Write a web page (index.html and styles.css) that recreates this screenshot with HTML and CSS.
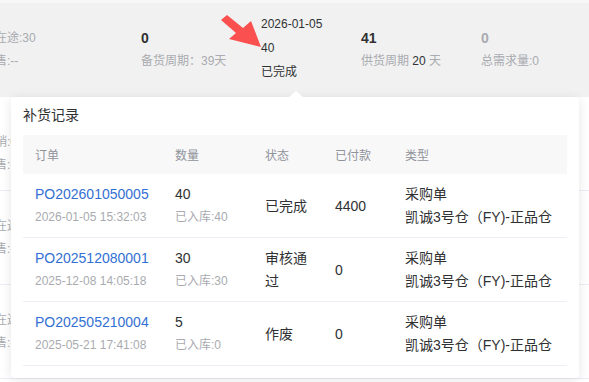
FILE: index.html
```html
<!DOCTYPE html>
<html lang="en">
<head>
    <meta charset="UTF-8">
    <meta name="viewport" content="width=device-width, initial-scale=1.0">
    <title>补货记录</title>
    <link rel="stylesheet" href="styles.css">
</head>
<body>
    <div class="page">
        <div class="row row-active">
            <div class="cell cell-a pad">
                <div class="muted">在途:30</div>
                <div class="muted">售:--</div>
            </div>
            <div class="cell cell-b pad">
                <div class="num">0</div>
                <div class="muted">备货周期：39天</div>
            </div>
            <div class="cell cell-c">
                <div>2026-01-05</div>
                <div>40</div>
                <div>已完成</div>
            </div>
            <div class="cell cell-d pad">
                <div class="num">41</div>
                <div class="muted">供货周期 <span class="dark">20</span> 天</div>
            </div>
            <div class="cell cell-e pad">
                <div class="num muted">0</div>
                <div class="muted">总需求量:0</div>
            </div>
        </div>
        <div class="row row-low">
            <div class="cell cell-a">
                <div class="muted">销:0</div>
                <div class="muted">售:--</div>
            </div>
        </div>
        <div class="row">
            <div class="cell cell-a">
                <div class="muted">在途:0</div>
                <div class="muted">售:--</div>
            </div>
        </div>
        <div class="row">
            <div class="cell cell-a">
                <div class="muted">在途:0</div>
                <div class="muted">售:--</div>
            </div>
        </div>

        <svg class="pointer" viewBox="218 12 48 44" width="48" height="44">
            <polygon points="227,15 243,28 251,21 261,47 229,39 236,33 221,20" fill="#fa5050"/>
        </svg>

        <div class="popover">
            <div class="popover-arrow"></div>
            <div class="popover-title">补货记录</div>
            <table class="record-table">
                <colgroup>
                    <col class="col-order">
                    <col class="col-qty">
                    <col class="col-status">
                    <col class="col-paid">
                    <col class="col-type">
                </colgroup>
                <tr>
                    <th>订单</th>
                    <th>数量</th>
                    <th>状态</th>
                    <th>已付款</th>
                    <th>类型</th>
                </tr>
                <tr>
                    <td><div class="link">PO202601050005</div><div class="muted">2026-01-05 15:32:03</div></td>
                    <td><div>40</div><div class="muted">已入库:40</div></td>
                    <td>已完成</td>
                    <td>4400</td>
                    <td><div>采购单</div><div>凯诚3号仓（FY)-正品仓</div></td>
                </tr>
                <tr>
                    <td><div class="link">PO202512080001</div><div class="muted">2025-12-08 14:05:18</div></td>
                    <td><div>30</div><div class="muted">已入库:30</div></td>
                    <td>审核通过</td>
                    <td>0</td>
                    <td><div>采购单</div><div>凯诚3号仓（FY)-正品仓</div></td>
                </tr>
                <tr>
                    <td><div class="link">PO202505210004</div><div class="muted">2025-05-21 17:41:08</div></td>
                    <td><div>5</div><div class="muted">已入库:0</div></td>
                    <td>作废</td>
                    <td>0</td>
                    <td><div>采购单</div><div>凯诚3号仓（FY)-正品仓</div></td>
                </tr>
            </table>
        </div>
    </div>
</body>
</html>
```

FILE: styles.css
```css
body {
    margin: 0;
    font-family: "Liberation Sans", "Noto Sans CJK SC", sans-serif;
    font-size: 12px;
    color: #303133;
    background-color: #fff;
    overflow: hidden;
}
.page {
    position: relative;
    width: 589px;
    height: 382px;
    overflow: hidden;
}
.row {
    display: flex;
    align-items: center;
    height: 94px;
    box-sizing: border-box;
    border-bottom: 1px solid #ebeef5;
    line-height: 23px;
}
.row-active {
    height: 97px;
    border-top: 3px solid #f7f7f7;
    border-bottom: none;
    padding-bottom: 4px;
    background-color: #f1f1f1;
}
.row-low {
    padding-top: 20px;
}
.cell {
    flex: none;
    box-sizing: border-box;
}
.pad {
    padding-top: 3px;
}
.cell-a {
    width: 146px;
    margin-left: -5px;
}
.cell-b {
    width: 120px;
}
.cell-c {
    width: 100px;
    line-height: 24px;
    color: #303133;
}
.cell-d {
    width: 120px;
}
.cell-e {
    width: 100px;
}
.num {
    font-size: 14px;
    font-weight: bold;
    color: #303133;
}
.num.muted {
    color: #a9abb0;
}
.muted {
    color: #a9abb0;
}
.dark {
    color: #303133;
}
.pointer {
    position: absolute;
    left: 218px;
    top: 12px;
}
.popover {
    position: absolute;
    left: 11px;
    top: 97px;
    width: 568px;
    box-sizing: border-box;
    padding: 8px 12px 12px;
    background-color: #fff;
    border-radius: 4px;
    box-shadow: 0 2px 12px 0 rgba(0, 0, 0, 0.1);
}
.popover-arrow {
    position: absolute;
    top: -6px;
    left: 278px;
    width: 0;
    height: 0;
    border-left: 7px solid transparent;
    border-right: 7px solid transparent;
    border-bottom: 6px solid #fff;
}
.popover-title {
    font-size: 14px;
    line-height: 20px;
    margin-bottom: 10px;
    color: #303133;
}
.record-table {
    width: 544px;
    table-layout: fixed;
    border-collapse: collapse;
}
.col-order { width: 140px; }
.col-qty { width: 90px; }
.col-status { width: 70px; }
.col-paid { width: 70px; }
.col-type { width: 174px; }
.record-table th {
    height: 39px;
    padding: 0 12px;
    text-align: left;
    font-weight: normal;
    font-size: 12px;
    color: #909399;
    background-color: #f8f8f9;
}
.record-table td {
    padding: 9px 12px 8px;
    font-size: 14px;
    line-height: 23px;
    color: #303133;
    border-bottom: 1px solid #ebeef5;
    vertical-align: middle;
}
.record-table td .muted {
    font-size: 12px;
}
.link {
    color: #3370d4;
}
```
